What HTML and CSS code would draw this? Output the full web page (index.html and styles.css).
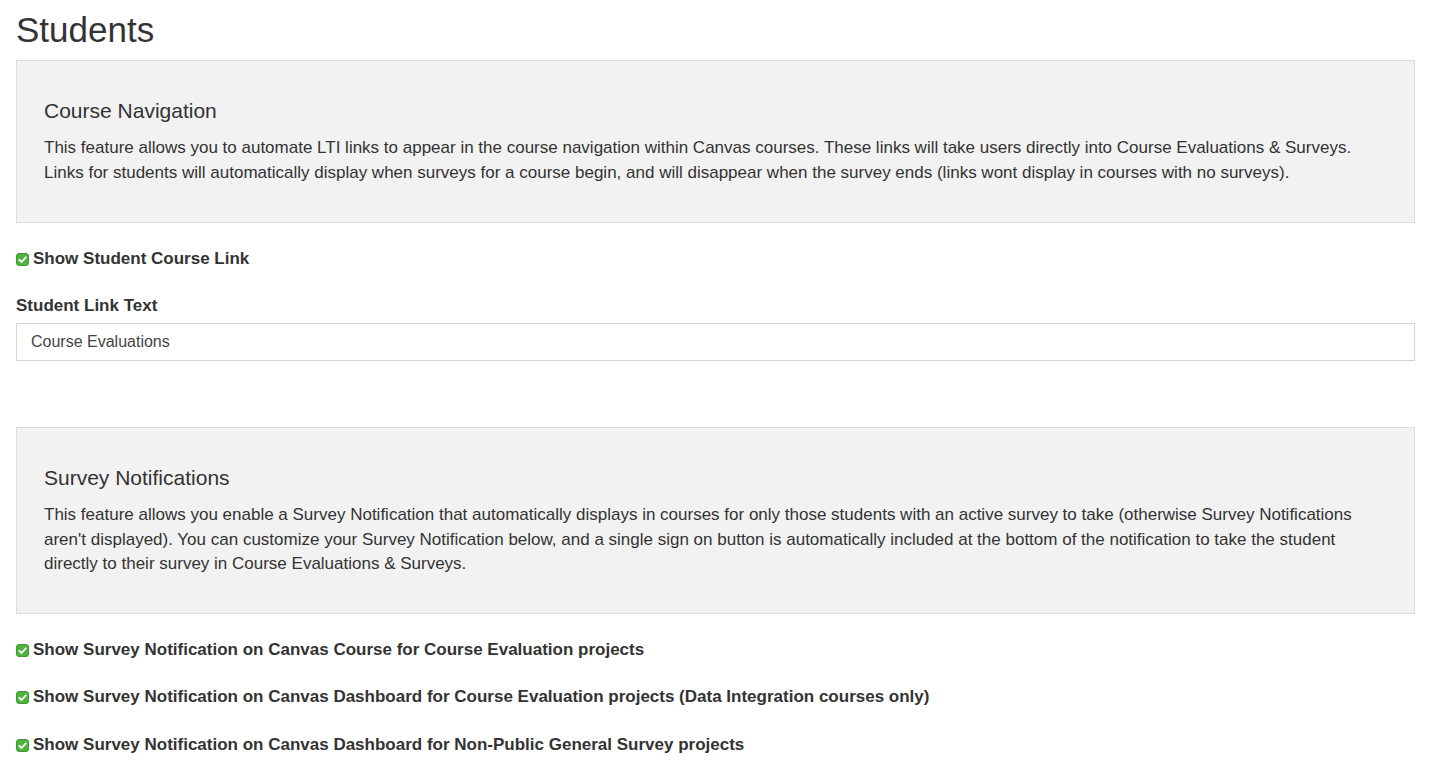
FILE: index.html
```html
<!DOCTYPE html>
<html lang="en">
<head>
<meta charset="utf-8">
<title>Students</title>
<link rel="stylesheet" href="styles.css">
</head>
<body>
<div class="page">
  <h1 class="title">Students</h1>

  <section class="panel">
    <h3 class="panel-title">Course Navigation</h3>
    <p class="panel-text">This feature allows you to automate LTI links to appear in the course navigation within Canvas courses. These links will take users directly into Course Evaluations &amp; Surveys. Links for students will automatically display when surveys for a course begin, and will disappear when the survey ends (links wont display in courses with no surveys).</p>
  </section>

  <label class="check-row first">
    <svg class="check" viewBox="0 0 13 13" width="13" height="13"><rect x="0.5" y="0.5" width="12" height="12" rx="2.5" fill="#4fb23f" stroke="#3e9a32"/><path d="M3.3 6.8 L5.5 9 L9.8 4.3" fill="none" stroke="#fff" stroke-width="1.8" stroke-linecap="round" stroke-linejoin="round"/></svg>
    <span>Show Student Course Link</span>
  </label>

  <div class="field">
    <div class="field-label">Student Link Text</div>
    <div class="input">Course Evaluations</div>
  </div>

  <section class="panel second">
    <h3 class="panel-title">Survey Notifications</h3>
    <p class="panel-text">This feature allows you enable a Survey Notification that automatically displays in courses for only those students with an active survey to take (otherwise Survey Notifications aren't displayed). You can customize your Survey Notification below, and a single sign on button is automatically included at the bottom of the notification to take the student directly to their survey in Course Evaluations &amp; Surveys.</p>
  </section>

  <label class="check-row after-panel">
    <svg class="check" viewBox="0 0 13 13" width="13" height="13"><rect x="0.5" y="0.5" width="12" height="12" rx="2.5" fill="#4fb23f" stroke="#3e9a32"/><path d="M3.3 6.8 L5.5 9 L9.8 4.3" fill="none" stroke="#fff" stroke-width="1.8" stroke-linecap="round" stroke-linejoin="round"/></svg>
    <span>Show Survey Notification on Canvas Course for Course Evaluation projects</span>
  </label>
  <label class="check-row">
    <svg class="check" viewBox="0 0 13 13" width="13" height="13"><rect x="0.5" y="0.5" width="12" height="12" rx="2.5" fill="#4fb23f" stroke="#3e9a32"/><path d="M3.3 6.8 L5.5 9 L9.8 4.3" fill="none" stroke="#fff" stroke-width="1.8" stroke-linecap="round" stroke-linejoin="round"/></svg>
    <span>Show Survey Notification on Canvas Dashboard for Course Evaluation projects (Data Integration courses only)</span>
  </label>
  <label class="check-row">
    <svg class="check" viewBox="0 0 13 13" width="13" height="13"><rect x="0.5" y="0.5" width="12" height="12" rx="2.5" fill="#4fb23f" stroke="#3e9a32"/><path d="M3.3 6.8 L5.5 9 L9.8 4.3" fill="none" stroke="#fff" stroke-width="1.8" stroke-linecap="round" stroke-linejoin="round"/></svg>
    <span>Show Survey Notification on Canvas Dashboard for Non-Public General Survey projects</span>
  </label>
</div>
</body>
</html>
```

FILE: styles.css
```css
html, body {
  margin: 0;
  padding: 0;
  background: #fff;
}

body {
  font-family: "Liberation Sans", Arial, Helvetica, sans-serif;
  color: #333;
  font-size: 16px;
}

.page {
  padding: 0 15px 0 16px;
}

.title {
  margin: 10px 0 10px;
  font-size: 35px;
  font-weight: 400;
  line-height: 40px;
  color: #333;
}

.panel {
  background: #f2f2f2;
  border: 1px solid #dcdcdc;
  padding: 38px 27px 37px;
}

.panel.second {
  margin-top: 66px;
  padding-bottom: 36.5px;
}

.panel-title {
  margin: 0 0 14px;
  font-size: 21px;
  font-weight: 400;
  line-height: 23px;
  color: #333;
}

.panel-text {
  margin: 0;
  font-size: 17px;
  line-height: 24.5px;
  color: #333;
}

.check-row {
  display: flex;
  align-items: center;
  gap: 4px;
  margin-top: 23.5px;
  font-size: 17px;
  font-weight: 700;
  line-height: 24px;
  color: #333;
}

.check-row.first {
  margin-top: 24px;
}

.check-row.after-panel {
  margin-top: 23.5px;
}

.check {
  flex: none;
  display: block;
  margin-top: 1px;
}

.field {
  margin-top: 23px;
}

.field-label {
  font-size: 17px;
  font-weight: 700;
  line-height: 24px;
  margin-bottom: 5px;
}

.input {
  border: 1px solid #d5d5d5;
  background: #fff;
  height: 36px;
  line-height: 36px;
  padding: 0 14px;
  font-size: 16px;
  color: #444;
}
```
